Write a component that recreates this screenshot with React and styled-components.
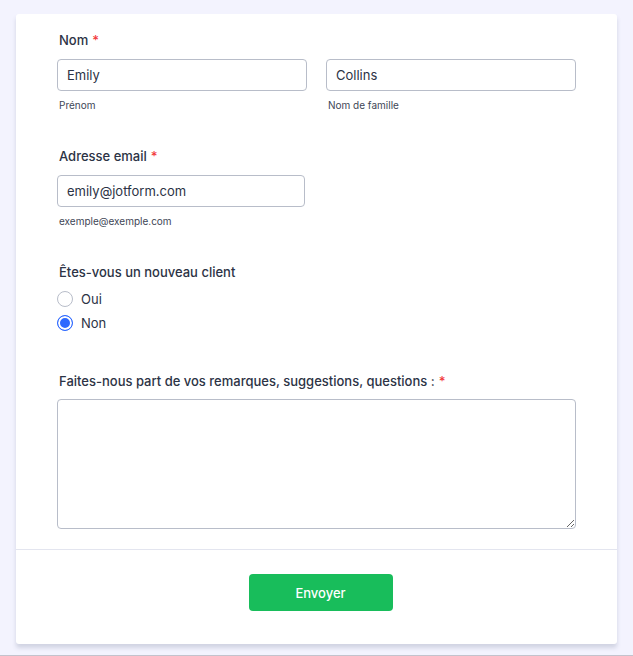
import React from "react";
import styled, { createGlobalStyle } from "styled-components";

const GlobalStyle = createGlobalStyle`
  * { box-sizing: border-box; }
  body {
    margin: 0;
    background: #f3f3fe;
    font-family: Inter, "Noto Sans", sans-serif;
    color: #2c3345;
  }
`;

const Page = styled.div`
  min-height: 656px;
  padding: 14px 16px 0;
  border-bottom: 1px solid #c3c3cd;
`;

const Card = styled.form`
  width: 601px;
  height: 630px;
  background: #fff;
  border-radius: 3px;
  box-shadow: 0 4px 4px rgba(87, 100, 126, 0.21);
  display: flex;
  flex-direction: column;
`;

const Body = styled.div`
  padding: 16px 41px 20px;
  display: flex;
  flex-direction: column;
  border-bottom: 1px solid #e3e5ef;
`;

const Field = styled.div`
  display: flex;
  flex-direction: column;
  margin-top: ${(p) => p.gap || 0}px;
`;

const Label = styled.label`
  font-size: 13px;
  line-height: 20px;
  font-weight: 500;
  padding-left: 2px;
  margin-bottom: ${(p) => p.space || 9}px;
`;

const Star = styled.span`
  color: #f23a3c;
  margin-left: 4px;
`;

const Row = styled.div`
  display: flex;
  gap: 19px;
`;

const Col = styled.div`
  display: flex;
  flex-direction: column;
  width: ${(p) => p.w || 250}px;
`;

const Input = styled.input`
  height: 32px;
  width: 100%;
  border: 1px solid #b8bdc9;
  border-radius: 4px;
  padding: 0 9px;
  font-family: inherit;
  font-size: 13px;
  color: #2c3345;
  outline: none;
`;

const Sub = styled.span`
  margin-top: 7px;
  padding-left: 2px;
  font-size: 10px;
  line-height: 14px;
  color: #3e4656;
`;

const RadioRow = styled.label`
  display: flex;
  align-items: center;
  gap: 8px;
  height: 24px;
  font-size: 13px;
  color: #2c3345;
`;

const Radio = styled.input`
  appearance: none;
  margin: 0;
  width: 16px;
  height: 16px;
  border-radius: 50%;
  border: 1px solid #b8bdc9;
  background: #fff;
  &:checked {
    border: 1.5px solid #2e69ff;
    box-shadow: inset 0 0 0 2px #fff;
    background: #2e69ff;
  }
`;

const TextArea = styled.textarea`
  width: 100%;
  height: 130px;
  border: 1px solid #b8bdc9;
  border-radius: 4px;
  font-family: inherit;
  font-size: 13px;
  outline: none;
  resize: vertical;
  display: block;
`;

const Footer = styled.div`
  display: flex;
  justify-content: center;
  padding: 24px 0 0 8px;
`;

const Submit = styled.button`
  width: 144px;
  height: 37px;
  border: none;
  border-radius: 4px;
  background: #18bd5b;
  color: #fff;
  font-family: inherit;
  font-size: 13px;
  font-weight: 500;
`;

const App = () => (
  <Page>
    <GlobalStyle />
    <Card onSubmit={(e) => e.preventDefault()}>
      <Body>
        <Field>
          <Label>Nom<Star>*</Star></Label>
          <Row>
            <Col>
              <Input defaultValue="Emily" />
              <Sub>Prénom</Sub>
            </Col>
            <Col>
              <Input defaultValue="Collins" />
              <Sub>Nom de famille</Sub>
            </Col>
          </Row>
        </Field>

        <Field gap={34}>
          <Label>Adresse email<Star>*</Star></Label>
          <Col w={248}>
            <Input defaultValue="emily@jotform.com" />
            <Sub>exemple@exemple.com</Sub>
          </Col>
        </Field>

        <Field gap={34}>
          <Label space={5}>Êtes-vous un nouveau client</Label>
          <RadioRow>
            <Radio type="radio" name="client" />
            Oui
          </RadioRow>
          <RadioRow>
            <Radio type="radio" name="client" defaultChecked />
            Non
          </RadioRow>
        </Field>

        <Field gap={36}>
          <Label space={8}>
            Faites-nous part de vos remarques, suggestions, questions :<Star>*</Star>
          </Label>
          <TextArea />
        </Field>
      </Body>
      <Footer>
        <Submit type="submit">Envoyer</Submit>
      </Footer>
    </Card>
  </Page>
);

export default App;
